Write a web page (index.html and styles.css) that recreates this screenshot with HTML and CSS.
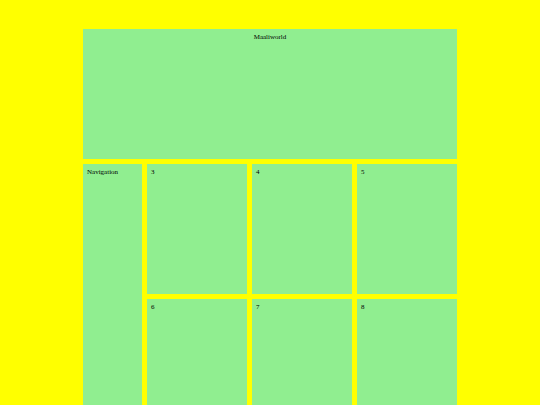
FILE: index.html
```html
<!DOCTYPE html>
<html>
<head>
<meta charset="utf-8">
<link rel="stylesheet" href="styles.css">
</head>
<body>
<div class="grid">
  <div class="box header">Maaliworld</div>
  <div class="box nav">Navigation</div>
  <div class="box">3</div>
  <div class="box">4</div>
  <div class="box">5</div>
  <div class="box">6</div>
  <div class="box">7</div>
  <div class="box">8</div>
</div>
</body>
</html>
```
FILE: styles.css
```css
html, body {
  margin: 0;
  background: #ffff00;
}
body {
  padding-top: 29px;
  font-family: "Liberation Serif", serif;
  font-size: 7px;
}
.grid {
  width: 374px;
  margin: 0 auto;
  display: grid;
  grid-template-columns: 59px 100px 100px 100px;
  grid-auto-rows: 130px;
  gap: 5px;
}
.box {
  background: #90ee90;
  padding: 4px;
  line-height: 8px;
}
.header {
  grid-column: 1 / 5;
  text-align: center;
}
.nav {
  grid-row: span 2;
}
```
